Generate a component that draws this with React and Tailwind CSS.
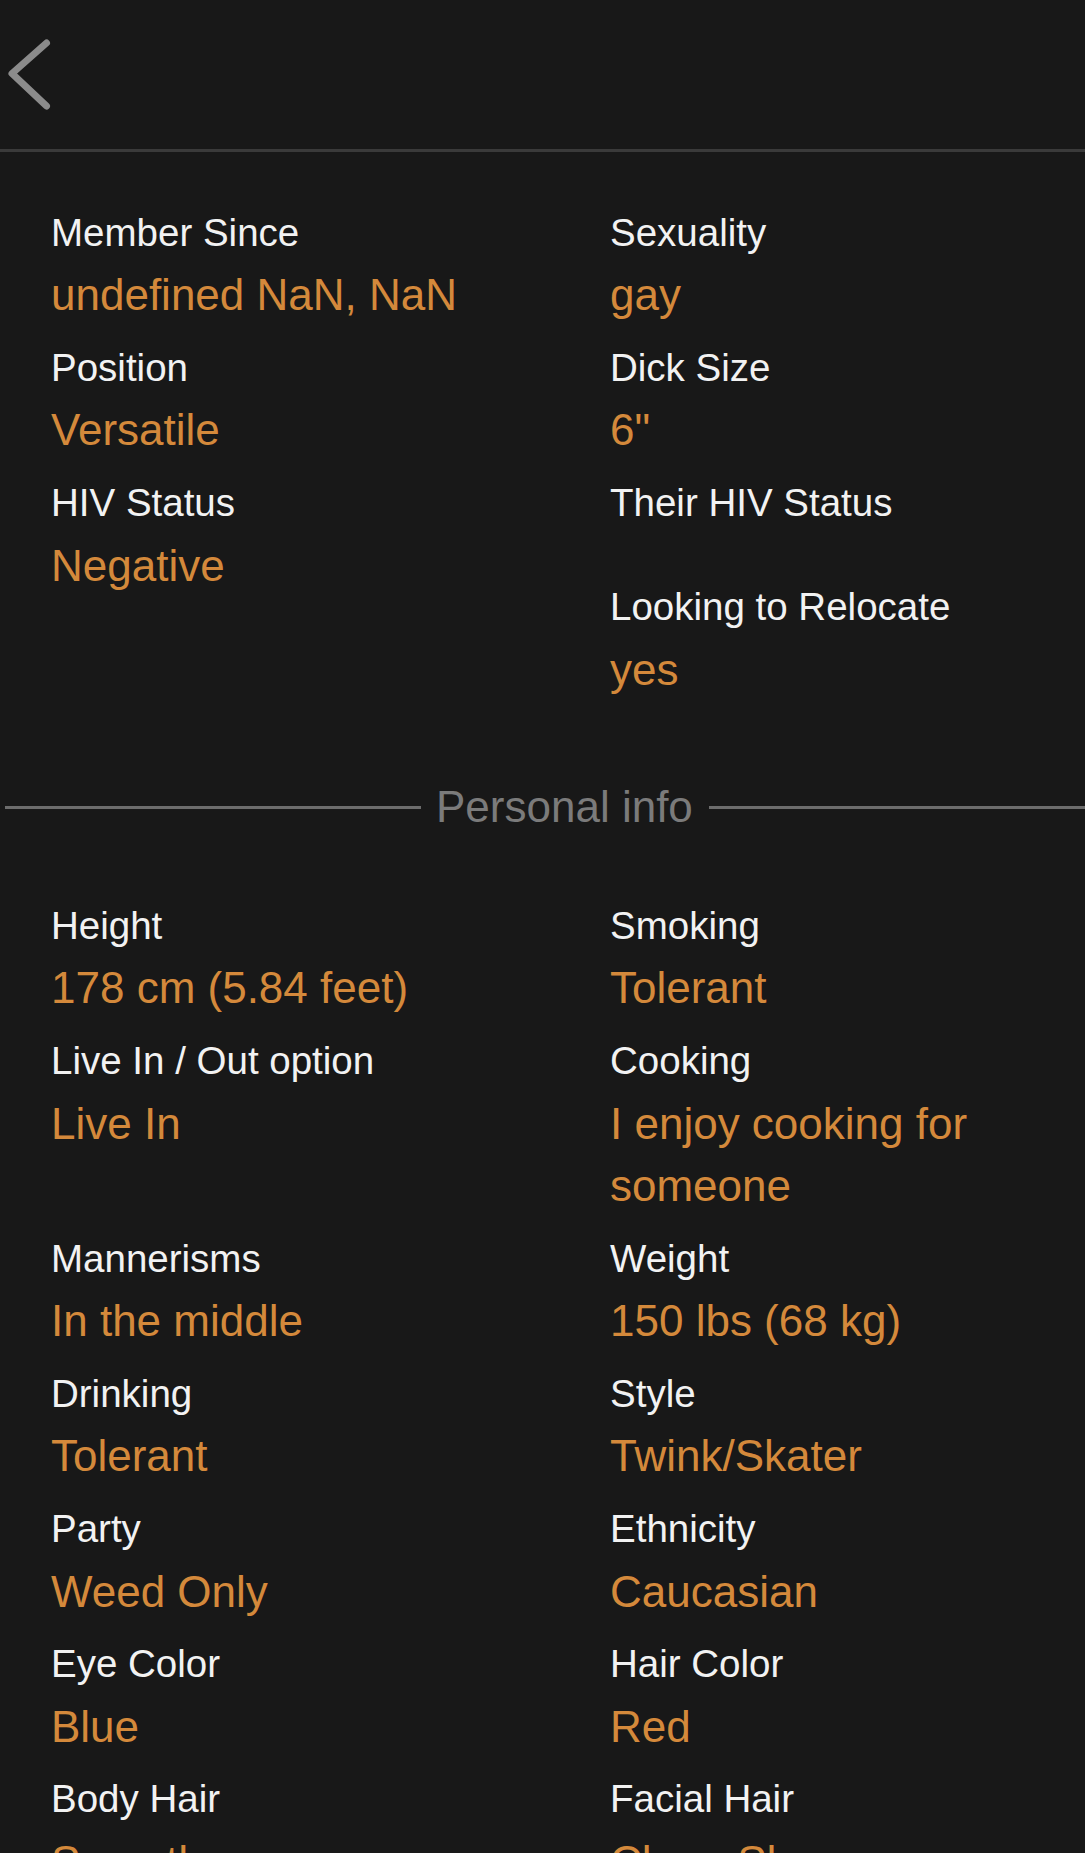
import { useState } from 'react';

const basics = {
    left: [
        { label: 'Member Since', value: 'undefined NaN, NaN' },
        { label: 'Position', value: 'Versatile' },
        { label: 'HIV Status', value: 'Negative' },
    ],
    right: [
        { label: 'Sexuality', value: 'gay' },
        { label: 'Dick Size', value: '6"' },
        { label: 'Their HIV Status', value: '' },
        { label: 'Looking to Relocate', value: 'yes' },
    ],
};

const personal = [
    { label: 'Height', value: '178 cm (5.84 feet)' },
    { label: 'Smoking', value: 'Tolerant' },
    { label: 'Live In / Out option', value: 'Live In' },
    { label: 'Cooking', value: 'I enjoy cooking for someone' },
    { label: 'Mannerisms', value: 'In the middle' },
    { label: 'Weight', value: '150 lbs (68 kg)' },
    { label: 'Drinking', value: 'Tolerant' },
    { label: 'Style', value: 'Twink/Skater' },
    { label: 'Party', value: 'Weed Only' },
    { label: 'Ethnicity', value: 'Caucasian' },
    { label: 'Eye Color', value: 'Blue' },
    { label: 'Hair Color', value: 'Red' },
    { label: 'Body Hair', value: 'Smooth' },
    { label: 'Facial Hair', value: 'Clean Shaven' },
];

function Field({ label, value }) {
    return (
        <div className="mb-[10px] pr-6">
            <div className="text-[38.5px] leading-[62.6px] text-[#f2f2f2]">{label}</div>
            {value ? (
                <div className="text-[44px] leading-[62.6px] text-[#d4893b]">{value}</div>
            ) : (
                <div className="h-[31.5px]" />
            )}
        </div>
    );
}

export default function App() {
    const [expanded] = useState(true);

    return (
        <div
            className="min-h-[1853px] overflow-hidden bg-[#181818]"
            style={{ fontFamily: '"Liberation Sans", Arial, Helvetica, sans-serif' }}
        >
            {/* Top bar */}
            <div className="h-[152px] border-b-[3px] border-[#3a3a3a] pt-[33px]">
                <button className="block">
                    <svg width="60" height="80" viewBox="0 0 60 80" fill="none">
                        <polyline
                            points="46.5,10 12,40.5 46.5,73"
                            stroke="#8b8b8b"
                            strokeWidth="7"
                            strokeLinecap="round"
                            strokeLinejoin="round"
                        />
                    </svg>
                </button>
            </div>

            {/* Basic info */}
            <div className="grid grid-cols-[559px_1fr] pl-[51px] pt-[49.6px]">
                <div className="flex flex-col">
                    {basics.left.map(f => <Field key={f.label} {...f} />)}
                </div>
                <div className="flex flex-col">
                    {basics.right.map(f => <Field key={f.label} {...f} />)}
                </div>
            </div>

            {/* Divider */}
            <div className="mt-[64.5px] flex items-center">
                <div className="ml-[5px] h-[3px] w-[416px] shrink-0 bg-[#6c6c6c]" />
                <span className="ml-[15px] mr-[16px] shrink-0 text-[44px] leading-[62.6px] text-[#7b7b7b]">
                    Personal info
                </span>
                <div className="h-[3px] flex-1 bg-[#6c6c6c]" />
            </div>

            {/* Personal info */}
            {expanded && (
                <div className="mt-[56.4px] grid grid-cols-[559px_1fr] pl-[51px]">
                    {personal.map(f => <Field key={f.label} {...f} />)}
                </div>
            )}
        </div>
    );
}
